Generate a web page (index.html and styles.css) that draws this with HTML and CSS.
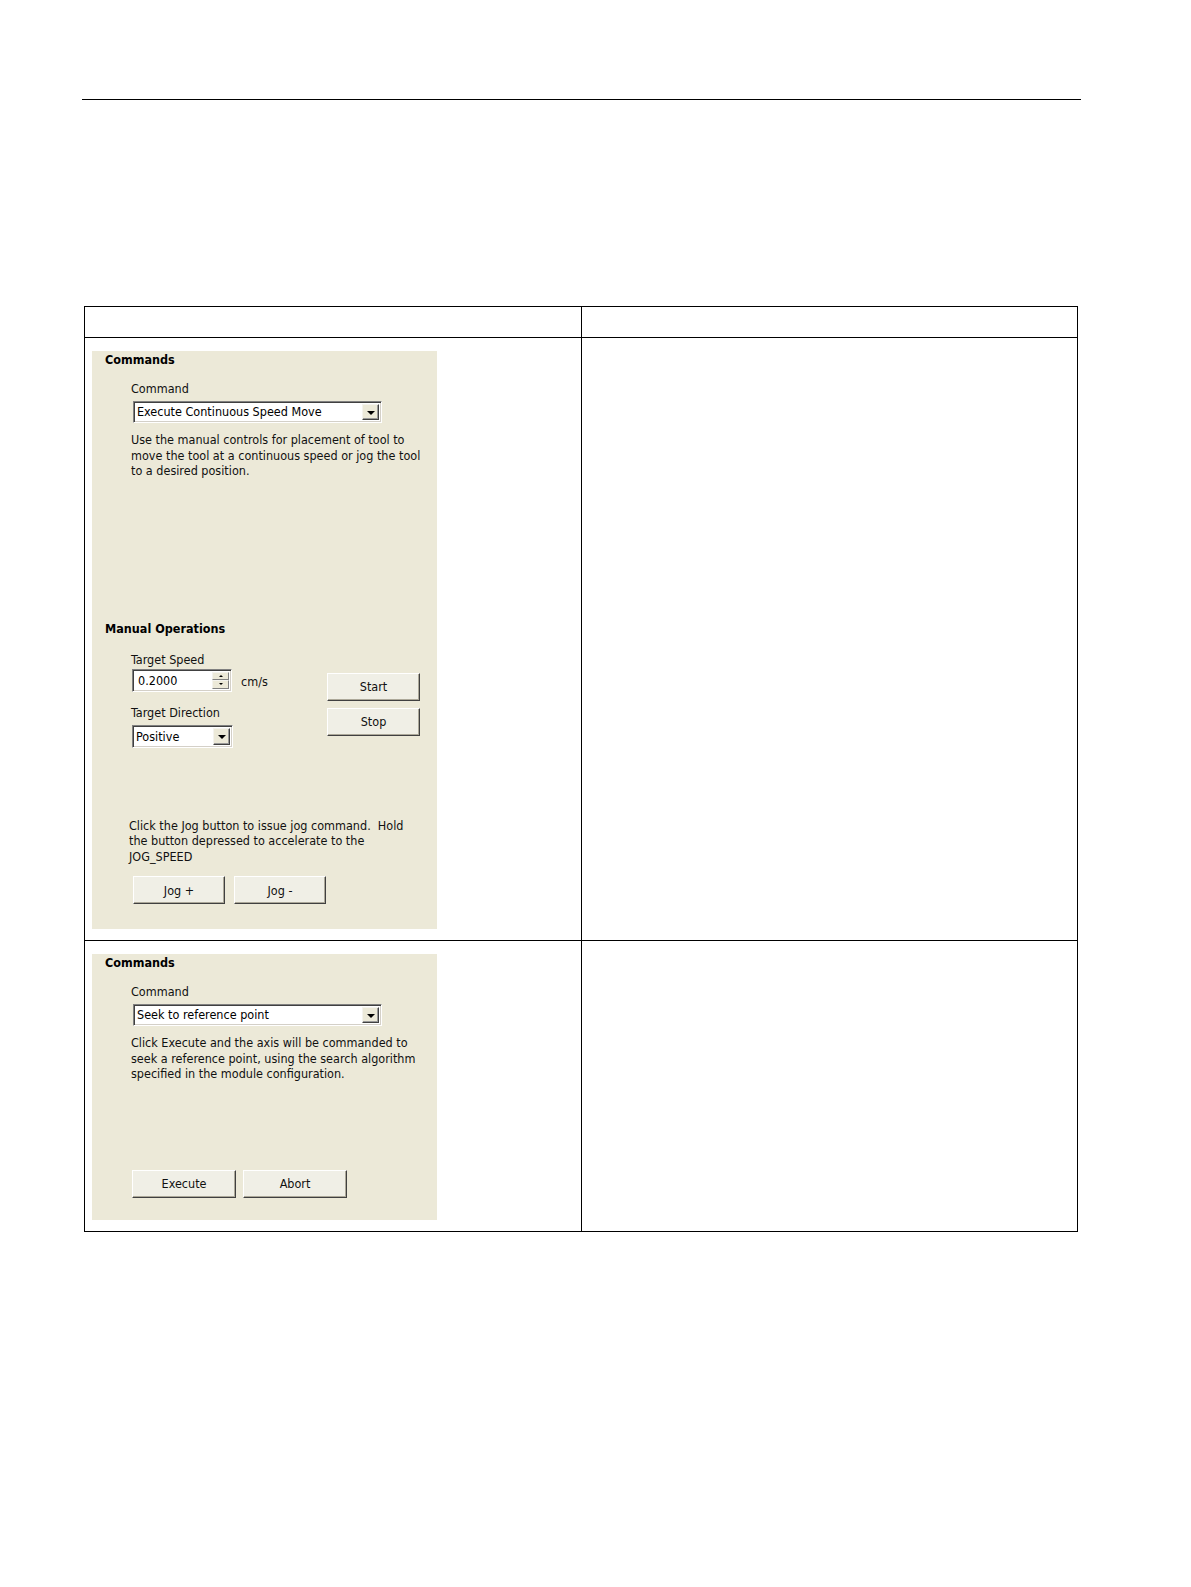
FILE: index.html
```html
<!DOCTYPE html>
<html>
<head>
<meta charset="utf-8">
<link rel="stylesheet" href="styles.css">
</head>
<body>
<div class="rule"></div>
<table class="grid">
  <tr class="head"><td class="c1"></td><td></td></tr>
  <tr>
    <td class="shot">
      <div class="panel p1">
        <div class="heading">Commands</div>
        <div class="label l-cmd">Command</div>
        <div class="combo c-cmd"><span class="val">Execute Continuous Speed Move</span><span class="drop"><i></i></span></div>
        <div class="desc d1">Use the manual controls for placement of tool to move the tool at a continuous speed or jog the tool to a desired position.</div>
        <div class="heading h-manual">Manual Operations</div>
        <div class="manual">
          <div class="mleft">
            <div class="label">Target Speed</div>
            <div class="spin-row">
              <div class="spin"><span class="val">0.2000</span><span class="arrows"><span class="up"><i></i></span><span class="dn"><i></i></span></span></div>
              <span class="unit">cm/s</span>
            </div>
            <div class="label l-dir">Target Direction</div>
            <div class="combo c-dir"><span class="val">Positive</span><span class="drop"><i></i></span></div>
          </div>
          <div class="mright">
            <div class="btn b-ss">Start</div>
            <div class="btn b-ss">Stop</div>
          </div>
        </div>
        <div class="desc d-jog">Click the Jog button to issue jog command.&nbsp; Hold the button depressed to accelerate to the JOG_SPEED</div>
        <div class="btnrow jogrow">
          <div class="btn b-jog">Jog +</div>
          <div class="btn b-jog">Jog -</div>
        </div>
      </div>
    </td>
    <td></td>
  </tr>
  <tr>
    <td class="shot">
      <div class="panel p2">
        <div class="heading">Commands</div>
        <div class="label l-cmd">Command</div>
        <div class="combo c-cmd"><span class="val">Seek to reference point</span><span class="drop"><i></i></span></div>
        <div class="desc d2">Click Execute and the axis will be commanded to seek a reference point, using the search algorithm specified in the module configuration.</div>
        <div class="btnrow execrow">
          <div class="btn b-ex">Execute</div>
          <div class="btn b-ex">Abort</div>
        </div>
      </div>
    </td>
    <td></td>
  </tr>
</table>
</body>
</html>
```
FILE: styles.css
```css
html, body {
  margin: 0;
  padding: 0;
  background: #fff;
}
body {
  font-family: "DejaVu Sans Condensed", "DejaVu Sans", sans-serif;
  font-stretch: condensed;
  color: #000;
}
.rule {
  margin: 99px 0 0 82px;
  width: 999px;
  height: 0;
  border-top: 1.5px solid #000;
}
.grid {
  margin: 206px 0 0 84px;
  border-collapse: collapse;
  table-layout: fixed;
  width: 994px;
}
.grid td {
  border: 1px solid #000;
  padding: 0;
  vertical-align: top;
}
.grid td.c1 {
  width: 496px;
}
.grid .head td {
  height: 30px;
}
.grid td.shot {
  padding: 13px 7px 11px 7px;
  width: 482px;
}
.panel {
  width: 345px;
  background: #ece9d8;
  box-sizing: border-box;
  padding: 1px 0 0 13px;
  font-size: 12.5px;
  color: #111;
}
.p1 { height: 578px; }
.p2 { height: 266px; }
.heading {
  font-weight: bold;
  line-height: 16px;
  color: #000;
}
.h-manual {
  margin-top: 142px;
}
.label {
  line-height: 16px;
  margin-left: 26px;
}
.l-cmd { margin-top: 13px; }
.combo {
  display: flex;
  align-items: stretch;
  box-sizing: border-box;
  height: 22px;
  margin-left: 28px;
  background: #fff;
  border: 1px solid;
  border-color: #808080 #fff #fff #808080;
  box-shadow: inset 1px 1px 0 #404040, inset -1px -1px 0 #d4d0c8;
  padding: 2px;
}
.c-cmd {
  width: 249px;
  margin-top: 4px;
}
.combo .val, .spin .val {
  flex: 1;
  line-height: 16px;
  padding-left: 1px;
  color: #000;
  white-space: nowrap;
}
.drop {
  width: 17px;
  box-sizing: border-box;
  background: #ece9d8;
  border: 1px solid;
  border-color: #f4f3ee #404040 #404040 #f4f3ee;
  box-shadow: inset -1px -1px 0 #999;
  display: flex;
  align-items: center;
  justify-content: center;
}
.drop i {
  display: block;
  width: 0;
  height: 0;
  border-left: 4px solid transparent;
  border-right: 4px solid transparent;
  border-top: 4px solid #000;
  margin-top: 1px;
}
.desc {
  margin-left: 26px;
  line-height: 15.5px;
  width: 300px;
}
.d1 { margin-top: 9px; }
.d2 { margin-top: 9px; width: 305px; }
.d-jog { margin-left: 24px; margin-top: 70px; width: 282px; }
.manual {
  display: flex;
  margin-top: 15px;
}
.mleft {
  width: 222px;
}
.mleft .label { margin-left: 26px; }
.spin-row {
  display: flex;
  align-items: center;
  margin-top: 1px;
}
.spin {
  display: flex;
  box-sizing: border-box;
  width: 100px;
  height: 23px;
  margin-left: 27px;
  background: #fff;
  border: 1px solid;
  border-color: #808080 #fff #fff #808080;
  box-shadow: inset 1px 1px 0 #404040, inset -1px -1px 0 #d4d0c8;
  padding: 2px;
}
.spin .val { padding-left: 3px; line-height: 17px; }
.arrows {
  width: 17px;
  display: flex;
  flex-direction: column;
}
.arrows span {
  flex: 1;
  box-sizing: border-box;
  background: #ece9d8;
  border: 1px solid;
  border-color: #f4f3ee #808080 #808080 #f4f3ee;
  display: flex;
  align-items: center;
  justify-content: center;
}
.arrows .up i {
  border-left: 2px solid transparent;
  border-right: 2px solid transparent;
  border-bottom: 2px solid #000;
}
.arrows .dn i {
  border-left: 2px solid transparent;
  border-right: 2px solid transparent;
  border-top: 2px solid #000;
}
.unit {
  margin-left: 9px;
  margin-top: 3px;
  color: #111;
}
.l-dir { margin-top: 13px; }
.c-dir {
  width: 101px;
  height: 23px;
  margin-left: 27px;
  margin-top: 4px;
}
.c-dir .val { line-height: 17px; }
.mright {
  display: flex;
  flex-direction: column;
  gap: 7px;
  margin-top: 21px;
}
.btn {
  box-sizing: border-box;
  background: #f0efe6;
  border: 1px solid;
  border-color: #fff #404040 #404040 #fff;
  box-shadow: inset -1px -1px 0 #aca899;
  display: flex;
  align-items: center;
  justify-content: center;
  color: #111;
  font-size: 12.5px;
}
.b-ss {
  width: 93px;
  height: 28px;
}
.btnrow {
  display: flex;
}
.jogrow {
  margin-left: 28px;
  margin-top: 12px;
  gap: 9px;
}
.b-jog {
  width: 92px;
  height: 28px;
}
.execrow {
  margin-left: 27px;
  margin-top: 88px;
  gap: 7px;
}
.b-ex {
  width: 104px;
  height: 28px;
}
```
